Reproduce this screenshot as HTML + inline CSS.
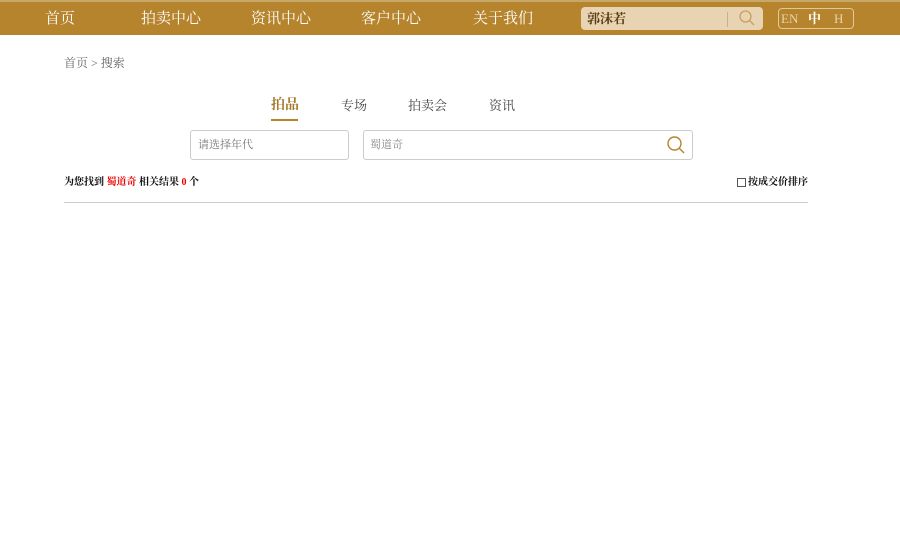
<!DOCTYPE html>
<html><head><meta charset="utf-8"><style>
*{margin:0;padding:0;box-sizing:border-box}
body{width:900px;height:544px;background:#fff;font-family:"Liberation Serif","Noto Serif CJK SC",serif;position:relative;overflow:hidden}
.a{position:absolute;white-space:nowrap;line-height:1.2}
.nav{position:absolute;left:0;top:0;width:900px;height:35px;background:#b5842c;border-top:2px solid #c8a868}
.nav .a{color:#fff;font-size:15px;top:8px}
</style></head><body>
<div class="nav">
<div class="a" style="left:45px">首页</div>
<div class="a" style="left:141px">拍卖中心</div>
<div class="a" style="left:251px">资讯中心</div>
<div class="a" style="left:361px">客户中心</div>
<div class="a" style="left:473px">关于我们</div>
<div class="a" style="left:581px;top:5px;width:182px;height:23px;background:#e8d4b2;border-radius:4px"></div>
<div class="a" style="left:587px;top:9px;font-size:13px;color:#5a3a10;font-weight:bold">郭沫若</div>
<div class="a" style="left:727px;top:10px;width:1px;height:15px;background:#c8b08a"></div>
<svg class="a" style="left:738px;top:7px" width="18" height="18" viewBox="0 0 18 18"><circle cx="7.5" cy="7.5" r="5.5" fill="none" stroke="#c8a060" stroke-width="1.3"/><line x1="11.5" y1="11.5" x2="16" y2="16" stroke="#c8a060" stroke-width="1.3"/></svg>
<div class="a" style="left:778px;top:6px;width:76px;height:21px;border:1px solid #e0c898;border-radius:4px"></div>
<div class="a" style="left:781px;top:9px;font-size:13px;color:#e8d4b0">EN</div>
<div class="a" style="left:808px;top:9px;font-size:13px;color:#fff;font-weight:bold">中</div>
<div class="a" style="left:834px;top:9px;font-size:13px;color:#e8d4b0">H</div>
</div>
<div class="a" style="left:64px;top:56px;font-size:12px;color:#666">首页 &gt; 搜索</div>
<div class="a" style="left:271px;top:98px;font-size:14px;color:#a47a2c;font-weight:bold">拍品</div>
<div class="a" style="left:271px;top:119px;width:27px;height:2px;background:#b5842c"></div>
<div class="a" style="left:341px;top:98px;font-size:13px;color:#444">专场</div>
<div class="a" style="left:408px;top:98px;font-size:13px;color:#444">拍卖会</div>
<div class="a" style="left:489px;top:98px;font-size:13px;color:#444">资讯</div>
<div class="a" style="left:190px;top:130px;width:159px;height:30px;border:1px solid #ccc;border-radius:3px"></div>
<div class="a" style="left:198px;top:139px;font-size:11px;color:#777">请选择年代</div>
<div class="a" style="left:363px;top:130px;width:330px;height:30px;border:1px solid #ccc;border-radius:3px"></div>
<div class="a" style="left:370px;top:139px;font-size:11px;color:#888">蜀道奇</div>
<svg class="a" style="left:666px;top:135px" width="20" height="20" viewBox="0 0 20 20"><circle cx="8.5" cy="8.5" r="6.5" fill="none" stroke="#b5842c" stroke-width="1.4"/><line x1="13" y1="13" x2="18" y2="18" stroke="#b5842c" stroke-width="1.4"/></svg>
<div class="a" style="left:64px;top:177px;font-size:10px;color:#111;font-weight:bold">为您找到 <span style="color:#e00">蜀道奇</span> 相关结果 <span style="color:#e00">0</span> 个</div>
<div class="a" style="left:737px;top:178px;width:9px;height:9px;border:1px solid #555"></div>
<div class="a" style="left:748px;top:177px;font-size:10px;color:#111;font-weight:bold">按成交价排序</div>
<div class="a" style="left:64px;top:202px;width:744px;height:1px;background:#ccc"></div>
</body></html>
